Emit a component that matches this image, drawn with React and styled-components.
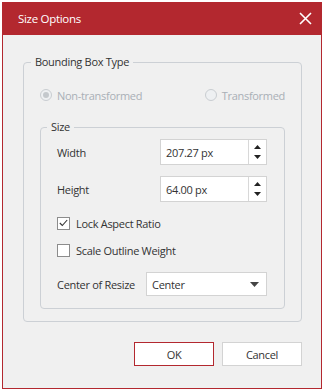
import React from "react";
import styled, { createGlobalStyle } from "styled-components";

const Global = createGlobalStyle`
  html, body { margin: 0; padding: 0; background: #ffffff; }
  body { font-family: "Open Sans", "Noto Sans", sans-serif; letter-spacing: -0.3px; }
  * { box-sizing: border-box; }
`;

const RED = "#b3282f";
const FS = "11px";

const Dialog = styled.div`
  width: 320px;
  height: 387px;
  margin: 2px 0 0 2px;
  display: flex;
  flex-direction: column;
  background: #f0f0f0;
`;

const Header = styled.div`
  height: 33px;
  flex: none;
  background: ${RED};
  display: flex;
  align-items: center;
  justify-content: space-between;
  padding: 0 10px 0 16px;
  color: #ffffff;
  font-size: 11.5px;
`;

const Title = styled.span`
  line-height: 16px;
`;

const CloseButton = styled.button`
  border: 0;
  background: transparent;
  padding: 0;
  width: 14px;
  height: 14px;
  display: flex;
  align-items: center;
  justify-content: center;
  cursor: pointer;
`;

const Body = styled.div`
  flex: 1;
  display: flex;
  flex-direction: column;
  border: 1px solid ${RED};
  border-top: 0;
  padding: 20px 19px 0 20px;
`;

const Group = styled.fieldset`
  margin: ${(p) => p.$mt || 0}px 0 0 0;
  padding: 0 16px ${(p) => p.$pb}px 16px;
  border: 1px solid #ccd0d5;
  border-radius: 4px;
  display: flex;
  flex-direction: column;
  min-width: 0;
`;

const Legend = styled.legend`
  margin-left: ${(p) => p.$ml}px;
  padding: 0 4px;
  font-size: ${FS};
  line-height: 14px;
  color: #333333;
`;

const RadioRow = styled.div`
  margin-top: 18px;
  height: 16px;
  display: flex;
  justify-content: space-between;
  align-items: center;
`;

const RadioOption = styled.label`
  display: flex;
  align-items: center;
  gap: 5px;
  font-size: ${FS};
  color: #a9afb6;
`;

const RadioCircle = styled.span`
  width: 12px;
  height: 12px;
  border-radius: 50%;
  border: 1px solid #c9cdd1;
  background: #eef0f2;
  display: flex;
  align-items: center;
  justify-content: center;
  &::after {
    content: "";
    width: 6px;
    height: 6px;
    border-radius: 50%;
    background: ${(p) => (p.$checked ? "#c4c8cc" : "transparent")};
  }
`;

const Row = styled.div`
  margin-top: ${(p) => p.$mt}px;
  display: flex;
  align-items: center;
  font-size: ${FS};
  color: #333333;
`;

const Label = styled.span`
  width: ${(p) => p.$w}px;
  flex: none;
`;

const SpinBox = styled.div`
  width: 107px;
  height: 26px;
  display: flex;
  background: #ffffff;
  border: 1px solid #d3d3d3;
`;

const SpinValue = styled.div`
  flex: 1;
  display: flex;
  align-items: center;
  padding-left: 5px;
  font-size: ${FS};
  color: #333333;
`;

const SpinButtons = styled.div`
  width: 18px;
  border-left: 1px solid #d8d8d8;
  display: flex;
  flex-direction: column;
  align-items: center;
  justify-content: center;
  gap: 6px;
`;

const Check = styled.label`
  display: flex;
  align-items: center;
  gap: 6px;
  height: 16px;
`;

const CheckBox = styled.span`
  width: 13px;
  height: 13px;
  border: 1px solid #8c8c8c;
  background: #ffffff;
  display: flex;
  align-items: center;
  justify-content: center;
`;

const Select = styled.div`
  width: 121px;
  height: 24px;
  background: #ffffff;
  border: 1px solid #d3d3d3;
  display: flex;
  align-items: center;
  justify-content: space-between;
  padding: 0 7px 0 5px;
  font-size: ${FS};
  color: #333333;
`;

const Footer = styled.div`
  margin-top: 20px;
  display: flex;
  justify-content: flex-end;
  gap: 8px;
`;

const Button = styled.button`
  width: 80px;
  height: 24px;
  background: #ffffff;
  border: 1px solid ${(p) => (p.$primary ? RED : "#d3d3d3")};
  font-family: inherit;
  letter-spacing: inherit;
  font-size: ${FS};
  color: #333333;
  padding: 0;
`;

const Up = () => (
  <svg width="7" height="4" viewBox="0 0 7 4">
    <path d="M3.5 0 L7 4 L0 4 Z" fill="#222" />
  </svg>
);
const Down = ({ w = 7, h = 4, c = "#222" }) => (
  <svg width={w} height={h} viewBox={`0 0 ${w} ${h}`}>
    <path d={`M0 0 L${w} 0 L${w / 2} ${h} Z`} fill={c} />
  </svg>
);

const Spin = ({ value }) => (
  <SpinBox>
    <SpinValue>{value}</SpinValue>
    <SpinButtons>
      <Up />
      <Down />
    </SpinButtons>
  </SpinBox>
);

export default function App() {
  return (
    <>
      <Global />
      <Dialog>
        <Header>
          <Title>Size Options</Title>
          <CloseButton aria-label="Close">
            <svg width="13" height="13" viewBox="0 0 13 13">
              <path d="M1 1 L12 12 M12 1 L1 12" stroke="#fff" strokeWidth="1.6" />
            </svg>
          </CloseButton>
        </Header>
        <Body>
          <Group $pb={12}>
            <Legend $ml={-9}>Bounding Box Type</Legend>
            <RadioRow>
              <RadioOption>
                <RadioCircle $checked />
                Non-transformed
              </RadioOption>
              <RadioOption>
                <RadioCircle />
                Transformed
              </RadioOption>
            </RadioRow>
            <Group $mt={17} $pb={12}>
              <Legend $ml={-10}>Size</Legend>
              <Row $mt={5}>
                <Label $w={103}>Width</Label>
                <Spin value="207.27 px" />
              </Row>
              <Row $mt={11}>
                <Label $w={103}>Height</Label>
                <Spin value="64.00 px" />
              </Row>
              <Row $mt={13}>
                <Check>
                  <CheckBox>
                    <svg width="9" height="8" viewBox="0 0 9 8">
                      <path d="M0.8 4 L3.3 6.5 L8.2 1" stroke="#333" strokeWidth="1.1" fill="none" />
                    </svg>
                  </CheckBox>
                  Lock Aspect Ratio
                </Check>
              </Row>
              <Row $mt={11}>
                <Check>
                  <CheckBox />
                  Scale Outline Weight
                </Check>
              </Row>
              <Row $mt={14}>
                <Label $w={89}>Center of Resize</Label>
                <Select>
                  Center
                  <Down w={9} h={5} c="#444" />
                </Select>
              </Row>
            </Group>
          </Group>
          <Footer>
            <Button $primary>OK</Button>
            <Button>Cancel</Button>
          </Footer>
        </Body>
      </Dialog>
    </>
  );
}
